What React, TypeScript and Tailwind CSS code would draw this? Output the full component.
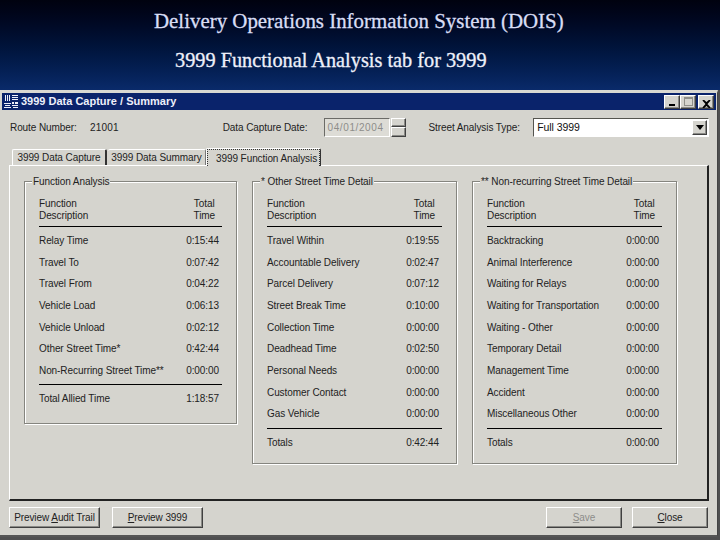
const mainRows = [
  ["Relay Time", "0:15:44"],
  ["Travel To", "0:07:42"],
  ["Travel From", "0:04:22"],
  ["Vehicle Load", "0:06:13"],
  ["Vehicle Unload", "0:02:12"],
  ["Other Street Time*", "0:42:44"],
  ["Non-Recurring Street Time**", "0:00:00"],
];

const otherRows = [
  ["Travel Within", "0:19:55"],
  ["Accountable Delivery", "0:02:47"],
  ["Parcel Delivery", "0:07:12"],
  ["Street Break Time", "0:10:00"],
  ["Collection Time", "0:00:00"],
  ["Deadhead Time", "0:02:50"],
  ["Personal Needs", "0:00:00"],
  ["Customer Contact", "0:00:00"],
  ["Gas Vehicle", "0:00:00"],
];

const nonRecurringRows = [
  ["Backtracking", "0:00:00"],
  ["Animal Interference", "0:00:00"],
  ["Waiting for Relays", "0:00:00"],
  ["Waiting for Transportation", "0:00:00"],
  ["Waiting - Other", "0:00:00"],
  ["Temporary Detail", "0:00:00"],
  ["Management Time", "0:00:00"],
  ["Accident", "0:00:00"],
  ["Miscellaneous Other", "0:00:00"],
];

const raised =
  "border border-t-white border-l-white border-r-[#404040] border-b-[#404040] bg-[#d5d4ce] shadow-[inset_-1px_-1px_0_#8a8a86]";

function GroupBox({
  title,
  rows,
  total,
  className,
}: {
  title: string;
  rows: string[][];
  total: string[];
  className: string;
}) {
  return (
    <div
      className={`relative shrink-0 border border-[#85857f] px-[14px] pt-[16px] shadow-[1px_1px_0_#fff,inset_1px_1px_0_#fff] ${className}`}
    >
      <span className="absolute left-[7px] top-[-7px] bg-[#d5d4ce] px-[1px] leading-[13px]">{title}</span>
      <div className="flex justify-between border-b border-[#000] pb-[4px] leading-[12px]">
        <div>
          Function
          <br />
          Description
        </div>
        <div className="pr-[7px] text-center">
          Total
          <br />
          Time
        </div>
      </div>
      <div className="mt-[2.6px]">
        {rows.map((r) => (
          <div key={r[0]} className="flex h-[21.7px] items-center justify-between pr-[3px]">
            <span>{r[0]}</span>
            <span>{r[1]}</span>
          </div>
        ))}
      </div>
      <div className="mt-[3px] flex h-[28px] items-center justify-between border-t border-[#000] pr-[3px]">
        <span>{total[0]}</span>
        <span>{total[1]}</span>
      </div>
    </div>
  );
}

function Arrow() {
  return (
    <svg width="8" height="5" viewBox="0 0 8 5">
      <path d="M0 0h8L4 5z" fill="#000" />
    </svg>
  );
}

function AppIcon() {
  return (
    <svg width="14" height="14" viewBox="0 0 14 14" className="shrink-0">
      <path
        d="M1 0h1v6H1zM3 0h1v6H3zM5 0h1v6H5zM8 0h6v1H8zM8 2h6v1H8zM8 4h6v1H8zM0 8h7v1H0zM1 10h5v1H1zM0 12h7v1H0zM8 7h2v2H8zM11 7h3v2h-3zM8 10h6v1H8zM9 12h5v1H9z"
        fill="#eef0fa"
      />
    </svg>
  );
}

function CaptionButton({ children, className }: { children: React.ReactNode; className: string }) {
  return (
    <div className={`flex h-[14px] w-[16px] items-end justify-center ${raised} ${className}`}>{children}</div>
  );
}

export default function App() {
  return (
    <div
      className="flex h-[540px] w-[720px] flex-col overflow-hidden bg-[#4f4f50] text-[10px] tracking-[-0.08px] text-[#222]"
      style={{ fontFamily: '"Liberation Sans", Arial, sans-serif' }}
    >
      <div
        className="flex h-[90px] shrink-0 flex-col bg-gradient-to-b from-[#00020f] via-[#001339] to-[#0a2a6a] tracking-normal"
        style={{ fontFamily: '"Liberation Serif", "Times New Roman", serif' }}
      >
        <h1 className="mt-[9px] pl-[154px] text-[20.9px] leading-[24px] font-normal text-[#d9def5] [-webkit-text-stroke:0.3px_#d9def5]">
          Delivery Operations Information System (DOIS)
        </h1>
        <h2 className="mt-[15px] pl-[175px] text-[20.3px] leading-[24px] font-normal text-[#eef0fa] [-webkit-text-stroke:0.3px_#eef0fa]">
          3999 Functional Analysis tab for 3999
        </h2>
      </div>

      <div className="flex h-[447px] w-[718px] shrink-0 flex-col border-t-[3px] border-r border-b-2 border-t-[#d9d8d2] border-r-[#444] border-b-[#555] bg-[#d5d4ce] pl-[1px]">
        <div className="mx-[1px] flex h-[17px] shrink-0 items-center bg-[#0a236b] px-[2px]">
          <AppIcon />
          <span className="ml-[3px] text-[11px] font-bold tracking-normal text-[#eef0fa]">
            3999 Data Capture / Summary
          </span>
          <div className="ml-auto flex items-center">
            <CaptionButton className="text-black">
              <span className="mb-[2px] h-[2px] w-[6px] bg-black" />
            </CaptionButton>
            <CaptionButton className="">
              <span className="mb-[2px] h-[9px] w-[9px] border border-t-2 border-[#8f8f8a]" />
            </CaptionButton>
            <CaptionButton className="ml-[2px] items-center">
              <svg width="9" height="8" viewBox="0 0 9 8">
                <path d="M1 0l3.5 3L8 0M1 8l3.5-3L8 8M1 0l7 8M8 0L1 8" stroke="#000" strokeWidth="1.6" fill="none" />
              </svg>
            </CaptionButton>
          </div>
        </div>

        <div className="flex min-h-0 flex-1 flex-col px-[8px]">
          <div className="mt-[8px] flex h-[19px] shrink-0 items-center">
            <span className="w-[81px] pl-[1px]">Route Number:</span>
            <span className="w-[133px] tracking-[0.2px]">21001</span>
            <span className="w-[101px]">Data Capture Date:</span>
            <div className="flex h-[19px] w-[67px] items-center border border-t-[#6b6b67] border-l-[#6b6b67] border-r-white border-b-white bg-[#dddcd6] pl-[3px] text-[#8d8d8a] tracking-[0.6px]">
              04/01/2004
            </div>
            <div className="ml-[1px] flex h-[19px] w-[15px] flex-col">
              <div className={`h-[9px] ${raised}`} />
              <div className={`h-[10px] ${raised}`} />
            </div>
            <span className="ml-[22px] w-[105px]">Street Analysis Type:</span>
            <div className="flex h-[19px] w-[176px] items-center justify-between border border-t-[#55554f] border-l-[#55554f] border-r-white border-b-white bg-white pl-[3px] pr-[1px] text-[10.5px] text-[#111]">
              Full 3999
              <div className={`flex h-[15px] w-[15px] items-center justify-center ${raised}`}>
                <Arrow />
              </div>
            </div>
          </div>

          <div className="mt-[11px] flex h-[17px] shrink-0 items-end pl-[3px]">
            <div className="flex h-[16px] w-[95px] items-center justify-center rounded-t-[2px] border-t border-l border-r-2 border-t-white border-l-white border-r-[#333]">
              3999 Data Capture
            </div>
            <div className="ml-[1px] flex h-[16px] w-[98px] items-center justify-center rounded-t-[2px] border-t border-r border-t-white border-r-[#777]">
              3999 Data Summary
            </div>
            <div className="relative z-10 mb-[-1px] flex h-[18px] w-[115px] rounded-t-[2px] border-t border-l border-r border-t-white border-l-white border-r-[#333] bg-[#d5d4ce]">
              <span className="flex w-full items-center border border-dotted border-[#333] border-b-0 pl-[8px]">
                3999 Function Analysis
              </span>
            </div>
          </div>

          <div className="flex h-[336px] shrink-0 items-start gap-[15px] border border-t-white border-l-white border-r-2 border-b-2 border-r-[#222] border-b-[#222] pl-[14px] pt-[15px]">
            <GroupBox
              title="Function Analysis"
              rows={mainRows}
              total={["Total Allied Time", "1:18:57"]}
              className="h-[243px] w-[213px]"
            />
            <GroupBox
              title="* Other Street Time Detail"
              rows={otherRows}
              total={["Totals", "0:42:44"]}
              className="h-[283px] w-[205px]"
            />
            <GroupBox
              title="** Non-recurring Street Time Detail"
              rows={nonRecurringRows}
              total={["Totals", "0:00:00"]}
              className="h-[283px] w-[205px]"
            />
          </div>

          <div className="mt-[6px] flex h-[21px] shrink-0 items-stretch">
            <button className={`w-[91px] ${raised}`}>
              Preview <u>A</u>udit Trail
            </button>
            <button className={`ml-[12px] w-[91px] ${raised}`}>
              <u>P</u>review 3999
            </button>
            <button className={`ml-auto w-[76px] text-[#8d8d8a] ${raised}`}>
              <u>S</u>ave
            </button>
            <button className={`ml-[10px] mr-[1px] w-[76px] ${raised}`}>
              <u>C</u>lose
            </button>
          </div>
        </div>
      </div>
    </div>
  );
}
